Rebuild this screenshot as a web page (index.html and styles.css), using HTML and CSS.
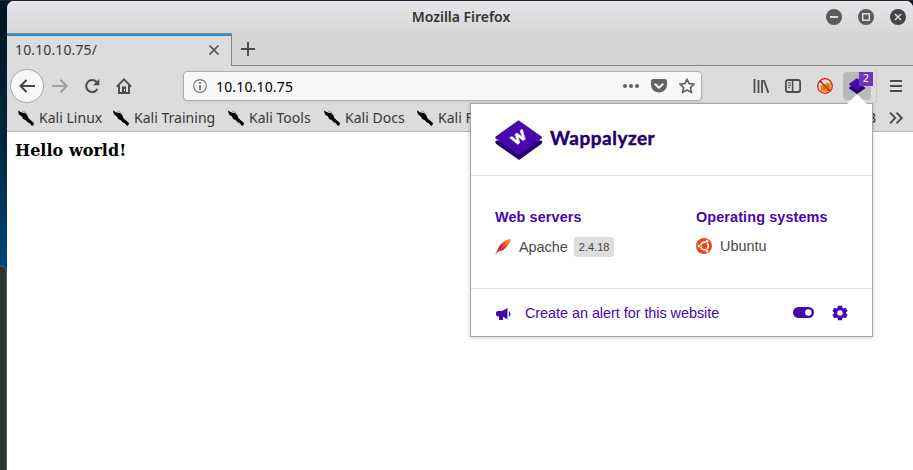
FILE: index.html
```html
<!DOCTYPE html>
<html lang="en">
<head>
<meta charset="utf-8">
<title>Mozilla Firefox</title>
<link rel="stylesheet" href="styles.css">
</head>
<body>
<svg class="defs" width="0" height="0" aria-hidden="true">
  <symbol id="kali" viewBox="0 0 16 16"><path d="M0 .3l2 1.500 2.500 1 2.500.2 2.500 2.500.8 2.500L13 10.500l3 2.500-.5 2-1.500 1-2.500-3-1.500-.5L7.500 10 5 9 4 6.500 1.500 5 .5 3z"/><path d="M4 .8L7 2l2.500 2.500" fill="none" stroke="#666" stroke-width=".6"/></symbol>
</svg>
<div class="desktop">
  <div class="dock"></div>
  <div class="window">
    <header class="titlebar">
      <span class="title">Mozilla Firefox</span>
      <div class="controls">
        <svg width="16" height="16"><circle cx="8" cy="8" r="8" fill="#5b5b5b"/><path d="M4 8h8" stroke="#ddd" stroke-width="2"/></svg>
        <svg width="16" height="16"><circle cx="8" cy="8" r="8" fill="#5b5b5b"/><path d="M4.7 4.7h6.6v6.6H4.7z" fill="none" stroke="#ddd" stroke-width="1.5"/></svg>
        <svg width="16" height="16"><circle cx="8" cy="8" r="8" fill="#434343"/><path d="M5 5l6 6M11 5l-6 6" stroke="#ddd" stroke-width="1.5"/></svg>
      </div>
    </header>
    <div class="tabs">
      <div class="tab"><span>10.10.10.75/</span><svg width="12" height="12"><path d="M1.5 1.5l9 9M10.500 1.500l-9 9" stroke="#4b4c4c" stroke-width="1.6"/></svg></div>
      <div class="rest"><svg width="14" height="14"><path d="M7 0v14M0 7h14" stroke="#4b4c4c" stroke-width="2"/></svg></div>
    </div>
    <nav class="toolbar">
      <div class="back"><svg width="16" height="16"><path d="M7.500 2L1.500 8l6 6M2 8h14" fill="none" stroke="#454646" stroke-width="2"/></svg></div>
      <svg class="forward" width="16" height="16"><path d="M8.500 1.800L14.700 8l-6.200 6.200M0 8h14" fill="none" stroke="#a1a1a1" stroke-width="2"/></svg>
      <svg class="reload" width="16" height="16"><path d="M12.600 4A6 6 0 1 0 13.400 11" fill="none" stroke="#4b4c4c" stroke-width="2"/><path d="M15.300 1v6.300H9z" fill="#4b4c4c"/></svg>
      <svg class="home" width="16" height="16"><path d="M.8 8.600L8 1.400l7.200 7.200M3 7v8h10V7" fill="none" stroke="#4b4c4c" stroke-width="1.9"/><path d="M6 8.500h4V15H6z" fill="#4b4c4c"/><path d="M8 11h1v2H8z" fill="#ddd"/></svg>
      <div class="urlbar">
        <svg width="14" height="14"><circle cx="7" cy="7" r="6.4" fill="none" stroke="#717171" stroke-width="1.1"/><path d="M7 3v2M7 6v5" stroke="#717171" stroke-width="1.8"/></svg>
        <span>10.10.10.75</span>
        <svg class="dots" width="16" height="16" fill="#646464"><circle cx="2" cy="8" r="2"/><circle cx="8" cy="8" r="2"/><circle cx="14" cy="8" r="2"/></svg>
        <svg width="16" height="16"><path d="M2 1h12q2 0 2 2v4A8 7.600 0 0 1 0 7V3Q0 1 2 1z" fill="#646464"/><path d="M4.300 6.200L8 9.700l3.700-3.500" fill="none" stroke="#f7f7f7" stroke-width="2" stroke-linecap="round" stroke-linejoin="round"/></svg>
        <svg width="16" height="16"><path d="M8 1.200l2.100 4.500 5 .5-3.700 3.400 1.100 5L8 12.100l-4.500 2.500 1.100-5L.9 6.200l5-.5z" fill="none" stroke="#646464" stroke-width="1.7" stroke-linejoin="round"/></svg>
      </div>
      <div class="tools">
        <svg width="16" height="16"><path d="M1.500 1v14M5.500 2v13M9 2v13M10.800 2l4.600 13" fill="none" stroke="#4b4c4c" stroke-width="1.8"/></svg>
        <svg width="16" height="16"><rect x=".9" y="2" width="14.2" height="12" rx="2" fill="none" stroke="#4b4c4c" stroke-width="1.8"/><path d="M7.600 2v12" stroke="#4b4c4c" stroke-width="1.5"/><path d="M3 5h3M3 7.300h3M3 9.600h2" stroke="#4b4c4c"/></svg>
        <svg width="16" height="16"><path d="M3 8l2-1 4-1 1-2 1.500 1.500L14 5l-.5 3 .5 2-1.500 3-4 1-5-1 .5-3z" fill="#e88a0c"/><path d="M3 4l2-.5M6 10l2 .5M10 9l2-1" stroke="#8b661f"/><circle cx="8" cy="8" r="7.300" fill="none" stroke="#d51a15" stroke-width="1.300"/><path d="M3 3l10 10" stroke="#d51a15" stroke-width="1.400"/></svg>
        <div class="extension"><svg width="16" height="16"><path d="M0 9.500L2.500 8h11L16 9.500v1L8 16 0 10.500z" fill="#240070"/><path d="M8 .2l7.500 5.300q.8.700 0 1.400L8 12.500.5 6.900q-.8-.7 0-1.400z" fill="#4608ad"/></svg><span class="badge">2</span></div>
      </div>
      <div class="menu"><svg width="12" height="12"><path d="M0 1h12M0 6h12M0 11h12" stroke="#4b4c4c" stroke-width="2"/></svg></div>
    </nav>
    <div class="bookmarks">
      <div class="bm linux"><svg width="16" height="16"><use href="#kali"/></svg><span>Kali Linux</span></div>
      <div class="bm training"><svg width="16" height="16"><use href="#kali"/></svg><span>Kali Training</span></div>
      <div class="bm ktools"><svg width="16" height="16"><use href="#kali"/></svg><span>Kali Tools</span></div>
      <div class="bm docs"><svg width="16" height="16"><use href="#kali"/></svg><span>Kali Docs</span></div>
      <div class="bm forums"><svg width="16" height="16"><use href="#kali"/></svg><span>Kali Forums</span></div>
      <span class="last">DB</span>
      <svg class="more" width="14" height="12"><path d="M1 .7L6.300 6 1 11.300M7.500 .7L12.800 6l-5.300 5.300" fill="none" stroke="#4b4c4c" stroke-width="1.9"/></svg>
    </div>
    <main class="page"><h1>Hello world!</h1></main>
  </div>
  <section class="popup">
    <svg class="arrow" width="22" height="11"><path d="M0 11L10 1q1-1 2 0l10 10z" fill="#fff"/></svg>
    <div class="brand">
      <svg width="48" height="40"><path d="M.3 22q0-1 1-1.500h45q1 .5 1 1.500t-1 2L24 40 1.300 24q-1-1-1-2z" fill="#240070"/><path d="M23.500.3L46.500 16.500q1 1 0 2L23.500 35 .7 18.500q-1-1 0-2z" fill="#4608ad"/><text class="mark" transform="translate(23.500 17.500) rotate(-34)" text-anchor="middle" y="5">w</text></svg>
      <span>Wappalyzer</span>
    </div>
    <div class="results">
      <div class="category">
        <h2>Web servers</h2>
        <div class="item"><svg width="16" height="16"><defs><linearGradient id="feather" x1="1" y1="0" x2="0" y2="1"><stop stop-color="#f8a11c"/><stop offset=".3" stop-color="#ed6429"/><stop offset=".55" stop-color="#c9203a"/><stop offset="1" stop-color="#74307f"/></linearGradient></defs><path d="M16 0q-5 0-9 4-4 4-4.500 7.500L0 16l3.500-3.500q4.500-.5 8-4.500 4-4 4.500-8z" fill="url(#feather)"/><path d="M.3 15.700L14 2" stroke="#f6b196" stroke-width=".5"/></svg><span>Apache</span><b class="version">2.4.18</b></div>
      </div>
      <div class="category os">
        <h2>Operating systems</h2>
        <div class="item"><svg width="16" height="16"><circle cx="8" cy="8" r="8" fill="#e24a18"/><circle cx="8.500" cy="8" r="3.800" fill="none" stroke="#fff" stroke-width="1.700"/><path d="M8.500 8L2 8M8.500 8l3.500-6M8.500 8l3.500 6" stroke="#e24a18" stroke-width="1"/><g fill="#fff" stroke="#e24a18" stroke-width=".5"><circle cx="2.800" cy="8" r="1.600"/><circle cx="11" cy="3.200" r="1.600"/><circle cx="11" cy="12.800" r="1.600"/></g></svg><span>Ubuntu</span></div>
      </div>
    </div>
    <footer class="footer">
      <svg class="horn" width="17" height="14" fill="#4608ad"><path d="M3 4h4l5.500-3v11.500L8 9.800V13H4V9.500H3Q1 9.500 1 7.500V6q0-2 2-2zM14 4q3 3 0 6z"/></svg>
      <span>Create an alert for this website</span>
      <svg class="switch" width="21" height="11"><rect width="21" height="11" rx="5.500" fill="#4608ad"/><circle cx="15.300" cy="5.500" r="3.200" fill="#fff"/></svg>
      <svg width="16" height="16" viewBox="0 0 16 16"><path d="M6 .8h4l.4 2 1.300.7 2-.7 1.900 3.300-1.500 1.300v1.200l1.500 1.300-1.900 3.300-2-.7-1.300.7-.4 2H6l-.4-2-1.300-.7-2 .7L.4 9.900l1.500-1.300V7.400L.4 6.100l1.900-3.300 2 .7 1.300-.7z" fill="#4608ad"/><circle cx="8" cy="8" r="2.700" fill="#fff"/></svg>
    </footer>
  </section>
</div>
</body>
</html>
```
FILE: styles.css
```css
* { box-sizing: border-box; }
body { margin: 0; overflow: hidden; font-family: "Noto Sans", sans-serif; font-size: 14px; color: #373737; }
svg { display: block; flex: none; }
.defs { position: absolute; }
.desktop { position: relative; display: flex; width: 913px; height: 470px; background: linear-gradient(#001624, #00263f 140px, #00477b 270px); border-top: 1px solid #242632; }
.dock { width: 7px; height: 205px; margin-top: auto; background: #2e3436; border: solid #53585a; border-width: 1px 1px 0 0; border-radius: 0 7px 0 0; flex: none; }
.window { width: 906px; height: 469px; background: #fff; border-radius: 7px 7px 0 0; overflow: hidden; }
.titlebar { display: flex; height: 32px; position: relative; background: linear-gradient(#e7e5e7, #d7d7d7); justify-content: flex-end; }
.title { position: absolute; left: 2px; right: 0; top: 5px; text-align: center; font-weight: 600; font-size: 14px; line-height: 22px; letter-spacing: -.03px; color: #333; }
.controls { display: flex; gap: 16px; padding: 8px 7px 0 0; }
.tabs { display: flex; height: 33px; background: #d5d5d5; }
.tab { width: 225px; border-top: 1px solid #898989; border-right: 1px solid #858585; box-shadow: inset 0 2px #2193d3; background: #dcdcdc; display: flex; justify-content: space-between; align-items: center; padding: 0 11px 0 8px; }
.tab span { font-size: 14px; letter-spacing: .12px; margin-top: -2px; }
.rest { flex: 1; border-bottom: 1px solid #858585; padding: 9px 0 0 9px; }
.toolbar { display: flex; align-items: center; height: 40px; background: #dcdcdc; }
.back { width: 34px; height: 34px; margin-left: 3px; border: 1px solid #a6a6a6; border-radius: 50%; background: #f8f8f8; display: grid; place-items: center; }
.forward { margin-left: 8px; }
.reload { margin-left: 16px; }
.home { margin-left: 16px; }
.urlbar { display: flex; align-items: center; width: 519px; height: 30px; margin-left: 51px; border: 1px solid #adadad; border-radius: 4px; background: #f8f8f8; padding: 0 6px 0 9px; gap: 12px; box-shadow: 0 1px 3px #0001; }
.urlbar span { margin-left: -3px; font-size: 14px; letter-spacing: .16px; color: #000; }
.dots { margin-left: auto; }
.tools { display: flex; align-items: center; gap: 16px; margin-left: 51px; }
.extension { position: relative; width: 28px; height: 28px; margin-left: -6px; background: #b9b9b9; border-radius: 4px; padding: 6px; }
.badge { position: absolute; left: 16px; top: 0; width: 14px; height: 14px; background: #6c36bd; color: #fff; font: 10px/14px "DejaVu Sans", sans-serif; text-align: center; }
.menu { margin-left: 5px; border-left: 1px solid #c8c8c8; height: 34px; padding: 11px 0 0 13px; }
.bookmarks { display: flex; align-items: center; height: 26px; background: #dcdcdc; border-bottom: 1px solid #b5b5b5; padding: 0 10px 1px 12px; font-size: 14px; white-space: nowrap; }
.bookmarks span { margin-top: -1px; }
.bm { display: flex; align-items: center; gap: 5px; flex: none; margin-left: -1px; }
.bm span { letter-spacing: .02px; }
.linux { width: 96px; }
.training { width: 116px; letter-spacing: .1px; }
.ktools { width: 97px; }
.docs { width: 94px; }
.last { margin-left: auto; margin-right: 13px; }
.page { padding: 9px 8px; }
h1 { margin: 0; font: bold 16px/20px "DejaVu Serif", serif; letter-spacing: .03px; color: #000; }
.popup { position: absolute; left: 470px; top: 102px; width: 403px; height: 234px; background: #fff; border: 1px solid #a6a6a6; box-shadow: 0 1px 4px #0003; font-family: "Liberation Sans", sans-serif; }
.arrow { position: absolute; left: 375px; top: -10px; }
.brand { height: 72px; display: flex; align-items: center; border-bottom: 1px solid #dedede; padding-left: 24px; gap: 7px; }
.brand span { font: bold 19px/28px Lato, sans-serif; letter-spacing: .5px; color: #240070; margin-top: -4px; -webkit-text-stroke: .45px #240070; }
.mark { font: 900 19px Lato, sans-serif; fill: #fff; stroke: #fff; stroke-width: .4px; }
.results { height: 113px; display: flex; padding: 32px 24px; border-bottom: 1px solid #dedede; }
.category { width: 201px; flex: none; }
.os { width: 153px; }
h2 { margin: 0; font-size: 14.4px; line-height: 18px; letter-spacing: .12px; color: #4608ad; white-space: nowrap; }
.item { display: flex; align-items: center; gap: 8px; height: 20px; margin-top: 11px; font-size: 14.4px; color: #494949; }
.os .item { height: 18px; }
.version { height: 20px; padding: 0 5px; margin-left: -2px; border-radius: 3px; background: #dedede; font-size: 11px; line-height: 21px; font-weight: normal; }
.footer { height: 47px; display: flex; align-items: center; padding: 0 24px; color: #4608ad; font-size: 14.4px; }
.footer span { margin-left: 13px; letter-spacing: -.03px; }
.horn { margin-top: 3px; }
.switch { margin: 0 18px 0 auto; }
```
